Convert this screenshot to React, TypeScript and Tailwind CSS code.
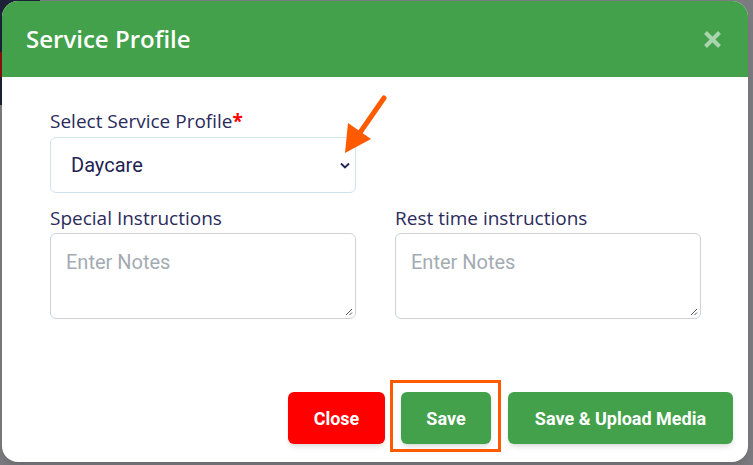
import React from "react";

export default function App() {
  const labelCls = "text-[19px] leading-[24px] text-[#2b2b5c] font-medium";
  return (
    <div className="relative w-[753px] h-[465px] overflow-hidden bg-[#7b7b80]" style={{ fontFamily: "'Open Sans', sans-serif" }}>
      <div className="absolute left-0 top-0 w-[40px] h-[105px] bg-[#1d2236]" />
      <div className="absolute left-0 top-[52px] w-[40px] h-[25px] bg-[#8a1010]" />
      <div className="relative pl-[2px] pt-[1px]">
        <div className="w-[746px] h-[461px] bg-white rounded-[16px] flex flex-col shadow-lg">
          <div className="h-[76px] bg-[#43a14b] rounded-t-[16px] flex items-center justify-between pl-[24px] pr-[26px]">
            <span className="text-white text-[24px] font-semibold leading-none">Service Profile</span>
            <svg width="19" height="19" viewBox="0 0 19 19">
              <path d="M2.5 2.5 L16.5 16.5 M16.5 2.5 L2.5 16.5" stroke="rgba(255,255,255,0.55)" strokeWidth="4" strokeLinecap="butt" />
            </svg>
          </div>
          <div className="flex flex-col pl-[48px] pr-[47px] pt-[32px]">
            <label className={labelCls}>
              Select Service Profile<span className="text-[#ff0000] font-bold">*</span>
            </label>
            <div className="mt-[4px] w-[306px] h-[56px] border border-[#cfe3ee] rounded-[6px] flex items-center justify-between pl-[20px] pr-[5px]">
              <span className="text-[20px] text-[#1f2352]" style={{ fontFamily: "Roboto, sans-serif" }}>Daycare</span>
              <svg width="10" height="7" viewBox="0 0 10 7">
                <path d="M1 1.5 L5 5.5 L9 1.5" fill="none" stroke="#1f2352" strokeWidth="1.8" />
              </svg>
            </div>
            <div className="mt-[13px] flex gap-[39px]">
              {["Special Instructions", "Rest time instructions"].map((t) => (
                <div key={t} className="flex flex-col w-[306px]">
                  <label className={labelCls}>{t}</label>
                  <div className="relative mt-[3px] h-[86px] border border-[#cfd3d8] rounded-[6px] pl-[15px] pt-[13px]">
                    <span className="text-[20px] text-[#a3abb3]" style={{ fontFamily: "Roboto, sans-serif" }}>Enter Notes</span>
                    <svg className="absolute right-[2px] bottom-[2px]" width="9" height="9" viewBox="0 0 9 9">
                      <path d="M8 2 L2 8 M8 5.5 L5.5 8" stroke="#555" strokeWidth="1" />
                    </svg>
                  </div>
                </div>
              ))}
            </div>
          </div>
          <div className="flex-1" />
          <div className="flex justify-end gap-[16px] pr-[15px] pb-[18px]" style={{ fontFamily: "Roboto, sans-serif" }}>
            <button className="w-[97px] h-[52px] rounded-[6px] bg-[#ff0000] text-white font-bold text-[18px] shadow-md">Close</button>
            <button className="w-[90px] h-[52px] rounded-[6px] bg-[#43a14b] text-white font-bold text-[18px] shadow-md">Save</button>
            <button className="ml-[1px] w-[225px] h-[52px] rounded-[6px] bg-[#43a14b] text-white font-bold text-[18px] shadow-md">Save &amp; Upload Media</button>
          </div>
        </div>
      </div>
      <div className="absolute left-[390px] top-[380px] w-[111px] h-[72px] border-[3px] border-[#ff5a00]" />
      <svg className="absolute left-[333px] top-[94px]" width="58" height="64" viewBox="0 0 58 64">
        <path d="M51 4 L26 40" stroke="#ff5a00" strokeWidth="5" strokeLinecap="round" />
        <path d="M12 59 L15 29 L38 45 Z" fill="#ff5a00" />
      </svg>
    </div>
  );
}
